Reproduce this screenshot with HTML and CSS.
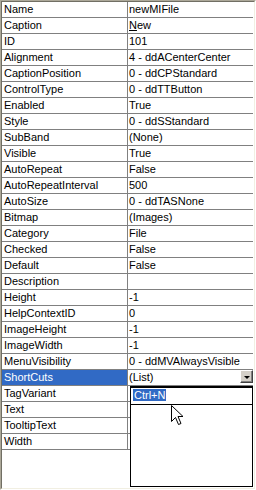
FILE: index.html
```html
<!DOCTYPE html>
<html lang="en">
<head>
    <meta charset="UTF-8">
    <title>Property Grid</title>
    <link rel="stylesheet" href="styles.css">
</head>
<body>
    <div class="frame">
        <div class="grid">
            <div class="row"><div class="name">Name</div><div class="value">newMIFile</div></div>
            <div class="row"><div class="name">Caption</div><div class="value"><u>N</u>ew</div></div>
            <div class="row"><div class="name">ID</div><div class="value">101</div></div>
            <div class="row"><div class="name">Alignment</div><div class="value">4 - ddACenterCenter</div></div>
            <div class="row"><div class="name">CaptionPosition</div><div class="value">0 - ddCPStandard</div></div>
            <div class="row"><div class="name">ControlType</div><div class="value">0 - ddTTButton</div></div>
            <div class="row"><div class="name">Enabled</div><div class="value">True</div></div>
            <div class="row"><div class="name">Style</div><div class="value">0 - ddSStandard</div></div>
            <div class="row"><div class="name">SubBand</div><div class="value">(None)</div></div>
            <div class="row"><div class="name">Visible</div><div class="value">True</div></div>
            <div class="row"><div class="name">AutoRepeat</div><div class="value">False</div></div>
            <div class="row"><div class="name">AutoRepeatInterval</div><div class="value">500</div></div>
            <div class="row"><div class="name">AutoSize</div><div class="value">0 - ddTASNone</div></div>
            <div class="row"><div class="name">Bitmap</div><div class="value">(Images)</div></div>
            <div class="row"><div class="name">Category</div><div class="value">File</div></div>
            <div class="row"><div class="name">Checked</div><div class="value">False</div></div>
            <div class="row"><div class="name">Default</div><div class="value">False</div></div>
            <div class="row"><div class="name">Description</div><div class="value"></div></div>
            <div class="row"><div class="name">Height</div><div class="value">-1</div></div>
            <div class="row"><div class="name">HelpContextID</div><div class="value">0</div></div>
            <div class="row"><div class="name">ImageHeight</div><div class="value">-1</div></div>
            <div class="row"><div class="name">ImageWidth</div><div class="value">-1</div></div>
            <div class="row"><div class="name">MenuVisibility</div><div class="value">0 - ddMVAlwaysVisible</div></div>
            <div class="row selected">
                <div class="name">ShortCuts</div>
                <div class="value">(List)<span class="drop-btn"><span class="arrow"></span></span></div>
            </div>
            <div class="row"><div class="name">TagVariant</div><div class="value"></div></div>
            <div class="row"><div class="name">Text</div><div class="value"></div></div>
            <div class="row"><div class="name">TooltipText</div><div class="value"></div></div>
            <div class="row"><div class="name">Width</div><div class="value"></div></div>
        </div>

        <!-- dropdown list opened from ShortCuts -->
        <div class="list">
            <div class="edit"><span class="sel-text">Ctrl+N</span></div>
        </div>

        <svg class="cursor" width="13" height="22" viewBox="0 0 13 22">
            <path d="M0.5 0.5 L0.5 16.5 L4.5 12.5 L7.5 19.5 L10 18.5 L7 11.5 L12 11.5 Z" fill="#fff" stroke="#000" stroke-width="1"/>
        </svg>
    </div>
</body>
</html>
```

FILE: styles.css
```css
body {
    margin: 0;
    font-family: "Liberation Sans", Arial, sans-serif;
    font-size: 11px;
}
.frame {
    position: relative;
    width: 256px;
    height: 490px;
    box-sizing: border-box;
    border-style: solid;
    border-width: 1px;
    border-color: #aca899 #ffffff #ffffff #aca899;
    background: #ece9d8;
}
.grid {
    height: 100%;
    box-sizing: border-box;
    border-style: solid;
    border-width: 1px;
    border-color: #716f64 #f1efe2 #f1efe2 #716f64;
    background: #fff;
    padding-right: 1px;
}
.row {
    display: flex;
    height: 15px;
    border-bottom: 1px solid #808080;
    line-height: 15px;
    color: #000;
}
.name {
    width: 123px;
    padding-left: 2px;
    border-right: 1px solid #808080;
    white-space: nowrap;
    overflow: hidden;
}
.value {
    flex: 1;
    position: relative;
    padding-left: 1px;
    white-space: nowrap;
}
.selected .name {
    background: #316ac5;
    color: #fff;
}
.drop-btn {
    position: absolute;
    right: 0;
    top: 0;
    width: 11px;
    height: 11px;
    border-style: solid;
    border-width: 1px;
    border-color: #fff #404040 #404040 #fff;
    box-shadow: inset -1px -1px 0 #808080, inset 1px 1px 0 #d4d0c8;
    background: #d4d0c8;
    display: flex;
    align-items: center;
    justify-content: center;
}
.arrow {
    width: 0;
    height: 0;
    border-left: 3px solid transparent;
    border-right: 3px solid transparent;
    border-top: 3px solid #000;
    margin-top: 1px;
}
.list {
    position: absolute;
    left: 129px;
    top: 385px;
    width: 123px;
    height: 101px;
    box-sizing: border-box;
    border: 1px solid #000;
    background: #fff;
}
.edit {
    height: 15px;
    border-top: 1px solid #000;
    border-bottom: 1px solid #000;
    padding: 1px 0 0 2px;
    line-height: 13px;
}
.sel-text {
    background: #316ac5;
    color: #fff;
    padding: 0 1px;
}
.cursor {
    position: absolute;
    left: 170px;
    top: 404px;
}
```
